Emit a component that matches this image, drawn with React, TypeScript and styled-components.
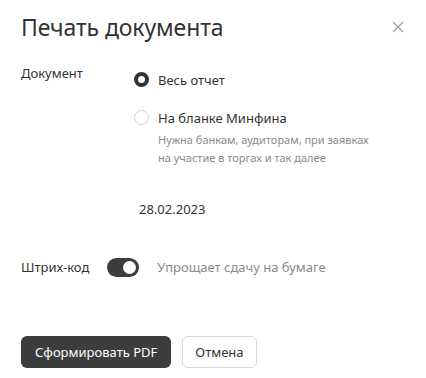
import React, { useState } from 'react';
import styled, { createGlobalStyle } from 'styled-components';

const GlobalStyle = createGlobalStyle`
  body {
    margin: 0;
    background: #ffffff;
    font-family: "Noto Sans", "Open Sans", sans-serif;
    color: #333333;
  }
`;

const App = () => {
  const [option, setOption] = useState<'full' | 'minfin'>('full');
  const [barcode, setBarcode] = useState(true);

  return (
    <Dialog>
      <GlobalStyle />
      <Header>
        <Title>Печать документа</Title>
        <Close aria-label="Закрыть">
          <svg width="12" height="12" viewBox="0 0 12 12">
            <path d="M1 1L11 11M11 1L1 11" stroke="#9a9a9a" strokeWidth="1.2" />
          </svg>
        </Close>
      </Header>

      <Field>
        <Label>Документ</Label>
        <Options>
          <Option onClick={() => setOption('full')}>
            <Radio checked={option === 'full'} />
            <OptionText>Весь отчет</OptionText>
          </Option>
          <Option onClick={() => setOption('minfin')}>
            <Radio checked={option === 'minfin'} />
            <div>
              <OptionText>На бланке Минфина</OptionText>
              <Hint>
                Нужна банкам, аудиторам, при заявках
                <br />
                на участие в торгах и так далее
              </Hint>
            </div>
          </Option>
          <DateValue>28.02.2023</DateValue>
        </Options>
      </Field>

      <ToggleRow>
        <Label>Штрих-код</Label>
        <Toggle on={barcode} onClick={() => setBarcode(!barcode)}>
          <Knob on={barcode} />
        </Toggle>
        <Note>Упрощает сдачу на бумаге</Note>
      </ToggleRow>

      <Actions>
        <PrimaryButton>Сформировать PDF</PrimaryButton>
        <SecondaryButton>Отмена</SecondaryButton>
      </Actions>
    </Dialog>
  );
};

export default App;

const Dialog = styled.div`
  width: 426px;
  height: 378px;
  box-sizing: border-box;
  padding: 10px 22px 0 21px;
  display: flex;
  flex-direction: column;
`;

const Header = styled.div`
  display: flex;
  justify-content: space-between;
  align-items: center;
  height: 34px;
`;

const Title = styled.div`
  font-size: 23px;
  font-weight: 400;
  letter-spacing: -0.1px;
  color: #333333;
`;

const Close = styled.button`
  border: none;
  background: none;
  padding: 0;
  width: 12px;
  height: 12px;
  display: flex;
  cursor: pointer;
`;

// документ
const Field = styled.div`
  display: grid;
  grid-template-columns: 113px 1fr;
  margin-top: 19px;
`;

const Label = styled.div`
  font-size: 13px;
  line-height: 20px;
  color: #333333;
`;

const Options = styled.div`
  display: flex;
  flex-direction: column;
  padding-top: 7px;
`;

const Option = styled.div`
  display: flex;
  align-items: flex-start;
  gap: 9px;
  margin-bottom: 18px;
  cursor: pointer;
`;

const Radio = styled.span<{ checked: boolean }>`
  width: 15px;
  height: 15px;
  box-sizing: border-box;
  border-radius: 50%;
  margin-top: 2px;
  flex-shrink: 0;
  border: ${(p) => (p.checked ? '4px solid #333333' : '1px solid #cfcfcf')};
  background: #ffffff;
`;

const OptionText = styled.div`
  font-size: 13px;
  line-height: 20px;
  color: #333333;
`;

const Hint = styled.div`
  font-size: 11px;
  line-height: 18px;
  color: #8a8a8a;
  margin-top: 3px;
`;

const DateValue = styled.div`
  font-size: 13px;
  line-height: 20px;
  color: #333333;
  padding-left: 5px;
  margin-top: 14px;
`;

// штрих-код
const ToggleRow = styled.div`
  display: flex;
  align-items: center;
  gap: 18px;
  margin-top: 38px;
`;

const Toggle = styled.button<{ on: boolean }>`
  width: 32px;
  height: 19px;
  border: none;
  border-radius: 10px;
  padding: 0 3px;
  display: flex;
  align-items: center;
  justify-content: ${(p) => (p.on ? 'flex-end' : 'flex-start')};
  background: ${(p) => (p.on ? '#3d3d3d' : '#cccccc')};
  cursor: pointer;
`;

const Knob = styled.span<{ on: boolean }>`
  width: 13px;
  height: 13px;
  border-radius: 50%;
  background: #ffffff;
`;

const Note = styled.div`
  font-size: 13px;
  color: #8a8a8a;
`;

const Actions = styled.div`
  display: flex;
  gap: 11px;
  margin-top: 59px;
`;

const PrimaryButton = styled.button`
  height: 32px;
  padding: 0 14px;
  border: none;
  border-radius: 6px;
  background: #3d3d3d;
  color: #ffffff;
  font-family: "Noto Sans", "Open Sans", sans-serif;
  font-size: 13px;
  cursor: pointer;
`;

const SecondaryButton = styled.button`
  height: 32px;
  padding: 0 12px;
  border: 1px solid #d6d6d6;
  border-radius: 6px;
  background: #ffffff;
  color: #333333;
  font-family: "Noto Sans", "Open Sans", sans-serif;
  font-size: 13px;
  cursor: pointer;
`;
